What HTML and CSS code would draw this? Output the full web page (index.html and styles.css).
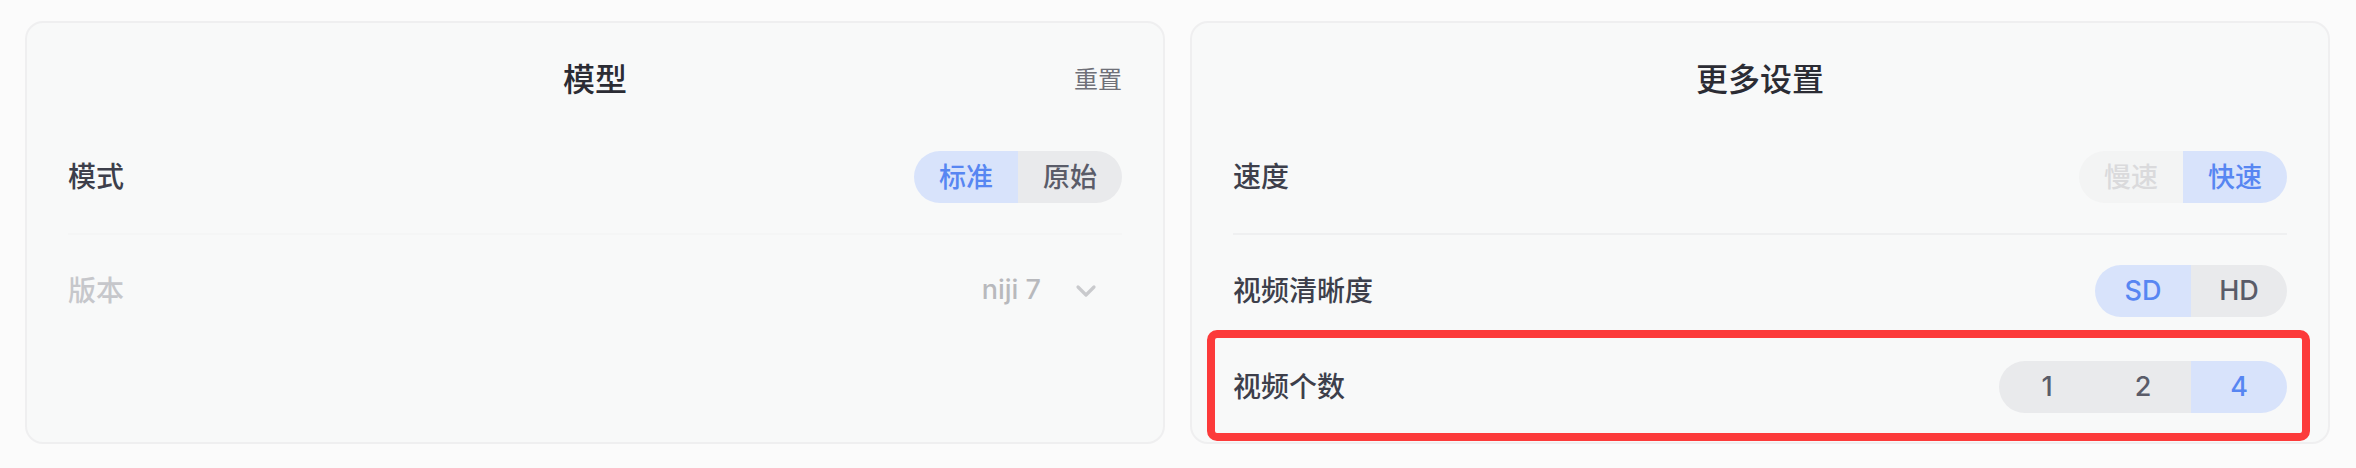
FILE: index.html
```html
<!DOCTYPE html>
<html lang="zh-CN">
<head>
<meta charset="utf-8">
<title>设置</title>
<link rel="stylesheet" href="styles.css">
</head>
<body>
<main class="panels">
  <section class="card">
    <header class="card-head">
      <span></span>
      <h2 class="card-title">模型</h2>
      <button class="reset">重置</button>
    </header>
    <div class="row">
      <span class="label">模式</span>
      <div class="seg">
        <span class="seg-item active">标准</span>
        <span class="seg-item">原始</span>
      </div>
    </div>
    <div class="divider faint"></div>
    <div class="row">
      <span class="label muted">版本</span>
      <div class="select">
        <span class="select-value">niji 7</span>
        <svg class="chev" width="22" height="14" viewBox="0 0 22 14"><polyline points="3,3 11,11 19,3" fill="none" stroke="#c9cacd" stroke-width="3.2" stroke-linecap="round" stroke-linejoin="round"/></svg>
      </div>
    </div>
  </section>

  <section class="card">
    <header class="card-head">
      <span></span>
      <h2 class="card-title">更多设置</h2>
      <span></span>
    </header>
    <div class="row">
      <span class="label">速度</span>
      <div class="seg">
        <span class="seg-item disabled">慢速</span>
        <span class="seg-item active">快速</span>
      </div>
    </div>
    <div class="divider"></div>
    <div class="row">
      <span class="label">视频清晰度</span>
      <div class="seg latin">
        <span class="seg-item active">SD</span>
        <span class="seg-item">HD</span>
      </div>
    </div>
    <div class="row highlighted">
      <span class="label">视频个数</span>
      <div class="seg latin">
        <span class="seg-item">1</span>
        <span class="seg-item">2</span>
        <span class="seg-item active">4</span>
      </div>
      <span class="highlight-box"></span>
    </div>
  </section>
</main>
</body>
</html>
```
FILE: styles.css
```css
* { box-sizing: border-box; }

html, body {
  margin: 0;
  background: #fbfbfb;
}

body {
  font-family: Inter, "Noto Sans CJK SC", "Noto Sans", sans-serif;
  color: #3d3f4b;
}

.panels {
  display: grid;
  grid-template-columns: 1fr 1fr;
  gap: 25px;
  padding: 21px 26px 24px 25px;
  height: 468px;
}

.card {
  background: #f8f9f9;
  border: 2px solid #efeff0;
  border-radius: 18px;
  padding: 25px 41px 7px;
  display: flex;
  flex-direction: column;
}

.card-head {
  height: 62px;
  margin-bottom: 19px;
  display: grid;
  grid-template-columns: 1fr auto 1fr;
  align-items: center;
}

.card-title {
  margin: 0;
  padding-bottom: 4px;
  font-family: "Noto Sans CJK SC", sans-serif;
  font-size: 32px;
  font-weight: 500;
  color: #2b2c34;
}

.reset {
  justify-self: end;
  background: none;
  border: 0;
  padding: 0 0 4px;
  font-family: "Noto Sans CJK SC", sans-serif;
  font-size: 24px;
  color: #6f7078;
}

.row {
  height: 96px;
  display: flex;
  align-items: center;
  justify-content: space-between;
  position: relative;
}

.label {
  padding-bottom: 4px;
  font-family: "Noto Sans CJK SC", sans-serif;
  font-size: 28px;
  font-weight: 500;
  color: #3d3f4b;
}

.label.muted {
  color: #c6c7cb;
}

.divider {
  height: 2px;
  margin: 8px 0;
  background: #eff0f1;
}

.divider.faint {
  background: #f5f6f6;
}

.seg {
  display: flex;
  height: 52px;
  border-radius: 26px;
  overflow: hidden;
}

.seg-item {
  min-width: 96px;
  padding: 0 25px 3px;
  display: flex;
  align-items: center;
  justify-content: center;
  background: #e9eaec;
  color: #5a5c69;
  font-family: "Noto Sans CJK SC", sans-serif;
  font-size: 27px;
  font-weight: 500;
}

.seg.latin .seg-item {
  padding: 0 20px 2px;
  font-family: Inter, "Noto Sans CJK SC", sans-serif;
  font-size: 27px;
  font-weight: 500;
}

.seg-item.active {
  background: #d8e3fb;
  color: #5786f2;
}

.seg-item.disabled {
  background: #f3f4f4;
  color: #dadadc;
}

.select {
  display: flex;
  align-items: center;
  gap: 34px;
  padding-right: 25px;
}

.select-value {
  padding-bottom: 3px;
  font-family: Inter, sans-serif;
  font-size: 27px;
  font-weight: 500;
  color: #b8b9bd;
}

.chev {
  display: block;
}

.highlight-box {
  position: absolute;
  top: -9px;
  bottom: -6px;
  left: -26px;
  right: -23px;
  border: 8px solid #fc3a3a;
  border-radius: 10px;
  pointer-events: none;
}
```
